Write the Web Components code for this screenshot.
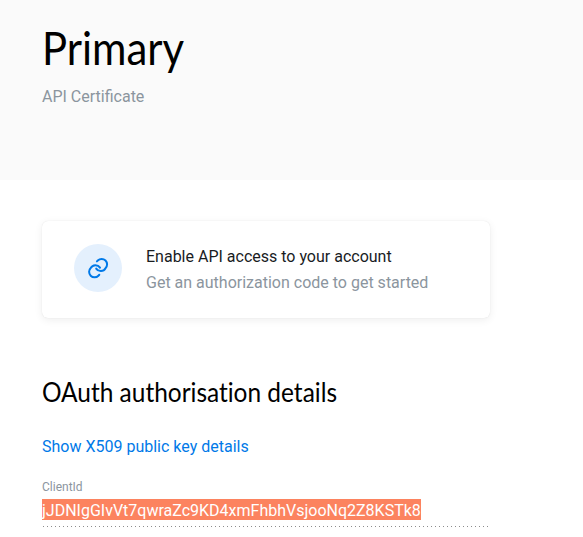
<!DOCTYPE html>
<html lang="en">
<head>
<meta charset="utf-8">
<title>API Certificate</title>
<style>
body{margin:0;background:#fff;font:16px/24px Roboto,sans-serif;color:#191c1f}
</style>
</head>
<body>
<certificate-page></certificate-page>
<script>
const define = (name, markup) => customElements.define(name, class extends HTMLElement {
  constructor() {
    super();
    this.attachShadow({mode: 'open'}).innerHTML = markup;
  }
});

define('page-header', `<style>
:host{display:block;box-sizing:border-box;height:180px;padding:20px 42px;background:#fafafa}
h1{margin:0;font:400 46px/56px Lato,sans-serif;color:#000;transform:scaleX(.91);transform-origin:0 50%;white-space:nowrap}
p{margin:9px 0 0;line-height:24px;color:#8b959e}
</style><h1><slot name="title"></slot></h1><p><slot></slot></p>`);

define('link-icon', `<style>
:host{display:grid;place-items:center;width:48px;height:48px;border-radius:50%;background:#e4f0fd;flex:none}
svg{display:block}
</style><svg width="24" height="24" viewBox="0 0 24 24" fill="none" stroke="#0079e8" stroke-width="2" stroke-linecap="round">
<path d="M10.9 5.4L11.8 4.5A5.4 5.4 0 0 1 19.5 12.2A5.4 5.4 0 0 1 10.2 12.6"/>
<path d="M13.3 18.8L12.4 19.7A5.4 5.4 0 0 1 4.7 12A5.4 5.4 0 0 1 14 11.6"/></svg>`);

define('action-card', `<style>
:host{display:flex;box-sizing:border-box;width:448px;height:97px;padding:0 32px;gap:24px;align-items:center;border-radius:6px;background:#fff;box-shadow:0 0 1px rgba(0,0,0,.12),0 2px 8px rgba(0,0,0,.07)}
link-icon{margin-bottom:3px}
.title,.detail{line-height:26px;white-space:nowrap}
.detail{color:#8b959e}
</style><link-icon></link-icon><div><div class="title"><slot name="title"></slot></div><div class="detail"><slot></slot></div></div>`);

define('section-heading', `<style>
:host{display:block}
h2{margin:0;font:400 26px/36px Lato,sans-serif;font-variant-ligatures:none;color:#000;white-space:nowrap;transform:scaleX(.94);transform-origin:0 50%}
</style><h2><slot></slot></h2>`);

define('text-link', `<style>
:host{display:block}
a{color:#0079e8;text-decoration:none;cursor:pointer}
</style><a><slot></slot></a>`);

define('detail-field', `<style>
:host{display:block;width:448px}
.label{font-size:12px;line-height:16px;color:#8b959e}
.value{display:flex;height:31px;padding-top:4px;box-sizing:border-box}
.value span{height:21px;line-height:23px;background:#fc835f;color:#fff;white-space:nowrap}
.rule{height:1px;background:repeating-linear-gradient(90deg,transparent 0 1px,#8c8c8c 1px 2px,transparent 2px 4px)}
</style><div class="label"><slot name="label"></slot></div><div class="value"><span><slot></slot></span></div><div class="rule"></div>`);

define('certificate-page', `<style>
:host{display:block;height:537px;overflow:hidden}
main{padding:41px 42px 0}
section-heading{margin-top:56px}
text-link{margin-top:25px}
detail-field{margin-top:20px}
</style>
<page-header><span slot="title">Primary</span>API Certificate</page-header>
<main>
<action-card><span slot="title">Enable API access to your account</span>Get an authorization code to get started</action-card>
<section-heading>OAuth authorisation details</section-heading>
<text-link>Show X509 public key details</text-link>
<detail-field><span slot="label">ClientId</span>jJDNIgGIvVt7qwraZc9KD4xmFhbhVsjooNq2Z8KSTk8</detail-field>
</main>`);
</script>
</body>
</html>
